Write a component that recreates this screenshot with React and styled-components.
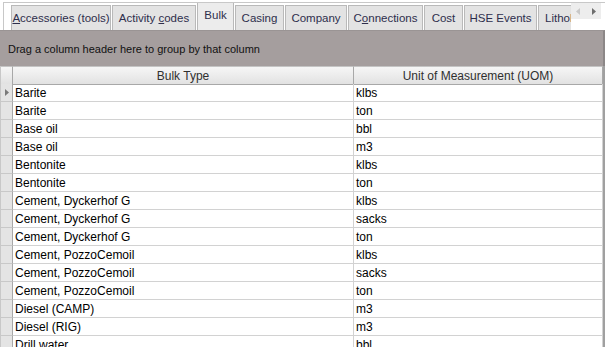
import React from 'react';
import styled, { createGlobalStyle } from 'styled-components';

const Global = createGlobalStyle`
  html, body { margin: 0; padding: 0; background: #fff; }
  body { font-family: "Liberation Sans", sans-serif; overflow: hidden; }
`;

const Frame = styled.div`
  width: 605px;
  height: 347px;
  display: flex;
  flex-direction: column;
  overflow: hidden;
  background: #fff;
`;

const TabStrip = styled.div`
  display: flex;
  border-top: 1px solid #c8c8c8;
  border-left: 1px solid #c8c8c8;
  margin: 2px 0 0 3px;
  box-sizing: border-box;
  height: 28px;
`;

const TabViewport = styled.div`
  flex: 1;
  display: flex;
  align-items: flex-end;
  padding-left: 7px;
  overflow: hidden;
`;

const Tab = styled.div`
  flex: none;
  width: ${p => p.w}px;
  height: ${p => (p.active ? 28 : 25)}px;
  box-sizing: border-box;
  display: flex;
  align-items: center;
  justify-content: ${p => (p.left ? 'flex-start' : 'center')};
  padding-left: ${p => (p.left ? 6 : 0)}px;
  white-space: nowrap;
  overflow: hidden;
  font-size: 11.5px;
  color: #2e2e4c;
  background: ${p => (p.active ? '#ececec' : '#e3e3e3')};
  border: 1px solid #b9b9b9;
  border-bottom: none;
  margin-right: 1px;
  padding-bottom: ${p => (p.active ? 4 : 0)}px;
`;

const Scroller = styled.div`
  flex: none;
  width: 30px;
  height: 16px;
  margin-right: 4px;
  background: #ededed;
  display: flex;
  align-items: center;
  justify-content: space-around;
`;

const GroupPanel = styled.div`
  height: 36px;
  box-sizing: border-box;
  background: #a59e9e;
  border-top: 1px solid #9a9494;
  display: flex;
  align-items: center;
  padding-left: 8px;
  font-size: 11px;
  color: #111;
  border-right: 2px solid #8c8787;
`;

const Grid = styled.div`
  flex: 1;
  display: grid;
  grid-template-columns: 12px 341px 1fr;
  grid-auto-rows: 18px;
  border-right: 2px solid #a0a0a0;
  border-left: 1px solid #c8c8c8;
  overflow: hidden;
  font-size: 12px;
  color: #000;
`;

const HeadCell = styled.div`
  height: 19px;
  box-sizing: border-box;
  background: linear-gradient(#f6f6f6, #e2e2e2);
  border-right: 1px solid #a8a8a8;
  border-bottom: 1px solid #a8a8a8;
  border-top: 1px solid #c4c4c4;
  display: flex;
  align-items: center;
  justify-content: center;
  color: #303030;
`;

const Indicator = styled.div`
  background: #e4e4e4;
  border-right: 1px solid #a8a8a8;
  border-bottom: 1px solid #c8c8c8;
  display: flex;
  align-items: center;
  justify-content: center;
`;

const Cell = styled.div`
  border-right: 1px solid #d2d2d2;
  border-bottom: 1px solid #d2d2d2;
  display: flex;
  align-items: center;
  padding-left: 2px;
  white-space: nowrap;
  overflow: hidden;
`;

const tabs = [
  { label: 'Accessories (tools)', u: 0, w: 100 },
  { label: 'Activity codes', u: 9, w: 84 },
  { label: 'Bulk', active: true, w: 37 },
  { label: 'Casing', w: 49 },
  { label: 'Company', w: 62 },
  { label: 'Connections', u: 1, w: 75 },
  { label: 'Cost', w: 39 },
  { label: 'HSE Events', w: 73 },
  { label: 'Lithology', w: 64, left: true },
];

const rows = [
  ['Barite', 'klbs'],
  ['Barite', 'ton'],
  ['Base oil', 'bbl'],
  ['Base oil', 'm3'],
  ['Bentonite', 'klbs'],
  ['Bentonite', 'ton'],
  ['Cement, Dyckerhof G', 'klbs'],
  ['Cement, Dyckerhof G', 'sacks'],
  ['Cement, Dyckerhof G', 'ton'],
  ['Cement, PozzoCemoil', 'klbs'],
  ['Cement, PozzoCemoil', 'sacks'],
  ['Cement, PozzoCemoil', 'ton'],
  ['Diesel (CAMP)', 'm3'],
  ['Diesel (RIG)', 'm3'],
  ['Drill water', 'bbl'],
];

function Label({ text, u }) {
  if (u === undefined) return <span>{text}</span>;
  return (
    <span>
      {text.slice(0, u)}<u>{text[u]}</u>{text.slice(u + 1)}
    </span>
  );
}

export default function App() {
  return (
    <Frame>
      <Global />
      <TabStrip>
        <TabViewport>
          {tabs.map(t => (
            <Tab key={t.label} active={t.active} w={t.w} left={t.left}>
              <Label text={t.label} u={t.u} />
            </Tab>
          ))}
        </TabViewport>
        <Scroller>
          <svg width="5" height="7" viewBox="0 0 5 7"><path d="M4 0 L0 3.5 L4 7Z" fill="#c8c8c8" /></svg>
          <svg width="5" height="7" viewBox="0 0 5 7"><path d="M1 0 L5 3.5 L1 7Z" fill="#6e6e6e" /></svg>
        </Scroller>
      </TabStrip>
      <GroupPanel>Drag a column header here to group by that column</GroupPanel>
      <Grid>
        <HeadCell />
        <HeadCell>Bulk Type</HeadCell>
        <HeadCell>Unit of Measurement (UOM)</HeadCell>
        {rows.map((r, i) => (
          <React.Fragment key={i}>
            <Indicator>
              {i === 0 && (
                <svg width="4" height="7" viewBox="0 0 4 7"><path d="M0 0 L4 3.5 L0 7Z" fill="#7a7a7a" /></svg>
              )}
            </Indicator>
            <Cell>{r[0]}</Cell>
            <Cell>{r[1]}</Cell>
          </React.Fragment>
        ))}
      </Grid>
    </Frame>
  );
}
